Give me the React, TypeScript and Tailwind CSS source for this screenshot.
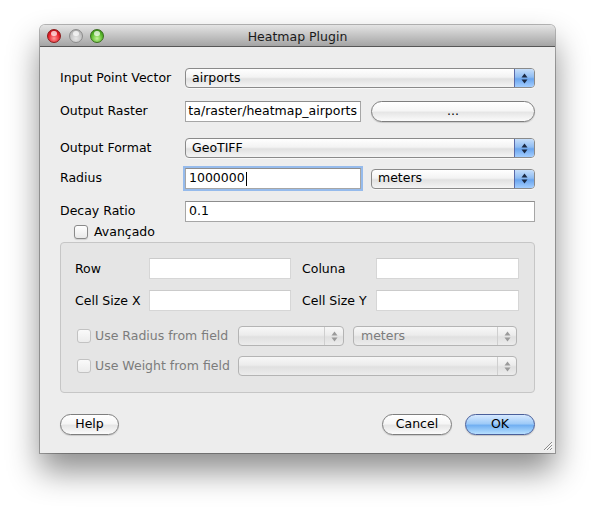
import type { ReactNode } from 'react';

const font = { fontFamily: '"DejaVu Sans", "Liberation Sans", sans-serif' };

const Arrows = ({ disabled }: { disabled?: boolean }) => (
  <svg width="7" height="11" viewBox="0 0 7 11">
    <path d="M3.5 0.5 L6.5 4.5 L0.5 4.5 Z" fill={disabled ? '#9a9a9a' : '#1c2a44'} />
    <path d="M3.5 10.5 L6.5 6.5 L0.5 6.5 Z" fill={disabled ? '#9a9a9a' : '#1c2a44'} />
  </svg>
);

const Combo = ({ value, className = '' }: { value: string; className?: string }) => (
  <div
    className={`flex h-[20px] items-stretch rounded-[4px] border border-[#8a8a8a] bg-[linear-gradient(#ffffff,#f3f3f3_45%,#e1e1e1_55%,#f4f4f4)] shadow-[0_1px_0_rgba(255,255,255,0.6)] ${className}`}
  >
    <div className="flex flex-1 items-center overflow-hidden pl-[6px] text-black">{value}</div>
    <div className="flex w-[20px] items-center justify-center rounded-r-[3px] border-l border-[#5a6aa8] bg-[linear-gradient(#c6defa,#8fbcf2_45%,#6aa5ee_55%,#a4ceff)]">
      <Arrows />
    </div>
  </div>
);

const DisabledCombo = ({ value, className = '' }: { value?: string; className?: string }) => (
  <div
    className={`flex h-[20px] items-stretch rounded-[4px] border border-[#b4b4b4] bg-[linear-gradient(#f7f7f7,#ececec_45%,#e0e0e0_55%,#ececec)] ${className}`}
  >
    <div className="flex flex-1 items-center overflow-hidden pl-[7px] text-[#7c7c7c]">{value}</div>
    <div className="flex w-[19px] items-center justify-center border-l border-[#cfcfcf]">
      <Arrows disabled />
    </div>
  </div>
);

const Field = ({ children, className = '' }: { children?: ReactNode; className?: string }) => (
  <div
    className={`flex h-[21px] items-center overflow-hidden whitespace-nowrap border border-[#a6a6a6] border-t-[#8d8d8d] bg-white px-[3px] text-black ${className}`}
  >
    {children}
  </div>
);

const PlainField = ({ className = '' }: { className?: string }) => (
  <div className={`h-[21px] border border-[#d6d6d6] border-t-[#cbcbcb] bg-white ${className}`} />
);

const Pill = ({ children, className = '' }: { children: ReactNode; className?: string }) => (
  <div
    className={`flex h-[21px] items-center justify-center rounded-full border border-[#7e7e7e] bg-[linear-gradient(#ffffff,#f6f6f6_45%,#e6e6e6_55%,#fbfbfb)] text-black shadow-[0_1px_1px_rgba(0,0,0,0.15)] ${className}`}
  >
    {children}
  </div>
);

const Check = ({ disabled }: { disabled?: boolean }) => (
  <div
    className={`h-[14px] w-[14px] shrink-0 rounded-[3px] border ${
      disabled
        ? 'border-[#c2c2c2] bg-[linear-gradient(#fafafa,#ececec)]'
        : 'border-[#8a8a8a] bg-[linear-gradient(#ffffff,#e9e9e9)] shadow-[0_1px_1px_rgba(0,0,0,0.12)]'
    }`}
  />
);

const Light = ({ color }: { color: 'red' | 'gray' | 'green' }) => {
  const cls = {
    red: 'bg-[radial-gradient(circle_at_50%_70%,#ff9a9a,#e8202a_55%,#9e0b12)] border-[#8a1a1a]',
    gray: 'bg-[radial-gradient(circle_at_50%_70%,#e6e6e6,#c4c4c4_55%,#9c9c9c)] border-[#8c8c8c]',
    green: 'bg-[radial-gradient(circle_at_50%_70%,#c6f59a,#58b82a_55%,#2d7a12)] border-[#3a6e1e]',
  }[color];
  return (
    <div className={`relative h-[14px] w-[14px] rounded-full border ${cls}`}>
      <div className="absolute left-[3px] top-[1px] h-[5px] w-[6px] rounded-full bg-white/70" />
    </div>
  );
};

export default function App() {
  return (
    <div className="h-[508px] w-[595px] bg-white pl-[40px] pt-[25px] text-[12.5px]" style={font}>
      <div className="relative flex h-[428px] w-[515px] flex-col rounded-t-[5px] bg-[#ededed] shadow-[0_18px_32px_rgba(0,0,0,0.45),0_0_0_1px_rgba(0,0,0,0.28)]">
        {/* title bar */}
        <div className="relative flex h-[22px] items-center rounded-t-[5px] border-b border-[#565656] bg-[linear-gradient(#e4e4e4,#c4c4c4_50%,#a4a4a4)]">
          <div className="flex items-center gap-[7.5px] pl-[7px]">
            <Light color="red" />
            <Light color="gray" />
            <Light color="green" />
          </div>
          <div className="absolute inset-x-0 top-[3px] text-center text-[#1a1a1a]">Heatmap Plugin</div>
        </div>

        <div className="flex flex-col px-[20px]">
          <div className="mt-[21px] flex items-center">
            <div className="w-[125px]">Input Point Vector</div>
            <Combo value="airports" className="flex-1" />
          </div>

          <div className="mt-[13px] flex items-center">
            <div className="w-[125px]">Output Raster</div>
            <Field className="w-[176px] justify-end">ta/raster/heatmap_airports</Field>
            <Pill className="ml-[10px] flex-1">...</Pill>
          </div>

          <div className="mt-[16px] flex items-center">
            <div className="w-[125px]">Output Format</div>
            <Combo value="GeoTIFF" className="flex-1" />
          </div>

          <div className="mt-[10px] flex items-center">
            <div className="w-[125px]">Radius</div>
            <Field className="w-[176px] border-[#7aa3d6] shadow-[0_0_0_2px_rgba(120,170,235,0.75)]">
              1000000
              <span className="ml-[1px] inline-block h-[14px] w-px bg-black" />
            </Field>
            <Combo value="meters" className="ml-[10px] flex-1" />
          </div>

          <div className="mt-[12px] flex items-center">
            <div className="w-[125px]">Decay Ratio</div>
            <Field className="flex-1">0.1</Field>
          </div>

          <div className="mt-[3px] flex h-[14px] items-center gap-[6px] pl-[14px]">
            <Check />
            <div>Avançado</div>
          </div>

          <div className="mt-[3px] flex h-[151px] flex-col rounded-[4px] border border-[#c6c6c6] bg-[#e5e5e5] px-[14px] pt-[15px]">
            <div className="flex items-center">
              <div className="w-[74px] pt-[2px]">Row</div>
              <PlainField className="w-[142px]" />
              <div className="ml-[11px] w-[74px] pt-[2px]">Coluna</div>
              <PlainField className="w-[143px]" />
            </div>
            <div className="mt-[11px] flex items-center">
              <div className="w-[74px] pt-[1px]">Cell Size X</div>
              <PlainField className="w-[142px]" />
              <div className="ml-[11px] w-[74px] pt-[1px]">Cell Size Y</div>
              <PlainField className="w-[143px]" />
            </div>
            <div className="mt-[15px] flex items-center">
              <div className="flex w-[163px] items-center gap-[4px] pl-[2px] text-[#7c7c7c]">
                <Check disabled />
                <div>Use Radius from field</div>
              </div>
              <DisabledCombo className="w-[106px]" />
              <DisabledCombo value="meters" className="ml-[9px] w-[164px]" />
            </div>
            <div className="mt-[10px] flex items-center">
              <div className="flex w-[163px] items-center gap-[4px] pl-[2px] text-[#7c7c7c]">
                <Check disabled />
                <div>Use Weight from field</div>
              </div>
              <DisabledCombo className="w-[279px]" />
            </div>
          </div>

          <div className="mt-[21px] flex items-center">
            <Pill className="w-[59px]">Help</Pill>
            <div className="flex-1" />
            <Pill className="w-[70px]">Cancel</Pill>
            <div className="ml-[13px] flex h-[21px] w-[70px] items-center justify-center rounded-full border border-[#4a5f9a] bg-[linear-gradient(#d6e9ff,#9fcbf8_45%,#72b0f2_55%,#b8e0ff)] text-black shadow-[0_1px_1px_rgba(0,0,0,0.18)]">
              OK
            </div>
          </div>
        </div>

        <svg className="absolute bottom-[2px] right-[2px]" width="11" height="11" viewBox="0 0 11 11">
          <path d="M10 2 L2 10 M10 5 L5 10 M10 8 L8 10" stroke="#8a8a8a" strokeWidth="1" />
          <path d="M10.5 3 L3 10.5 M10.5 6 L6 10.5 M10.5 9 L9 10.5" stroke="#ffffff" strokeWidth="1" />
        </svg>
      </div>
    </div>
  );
}
